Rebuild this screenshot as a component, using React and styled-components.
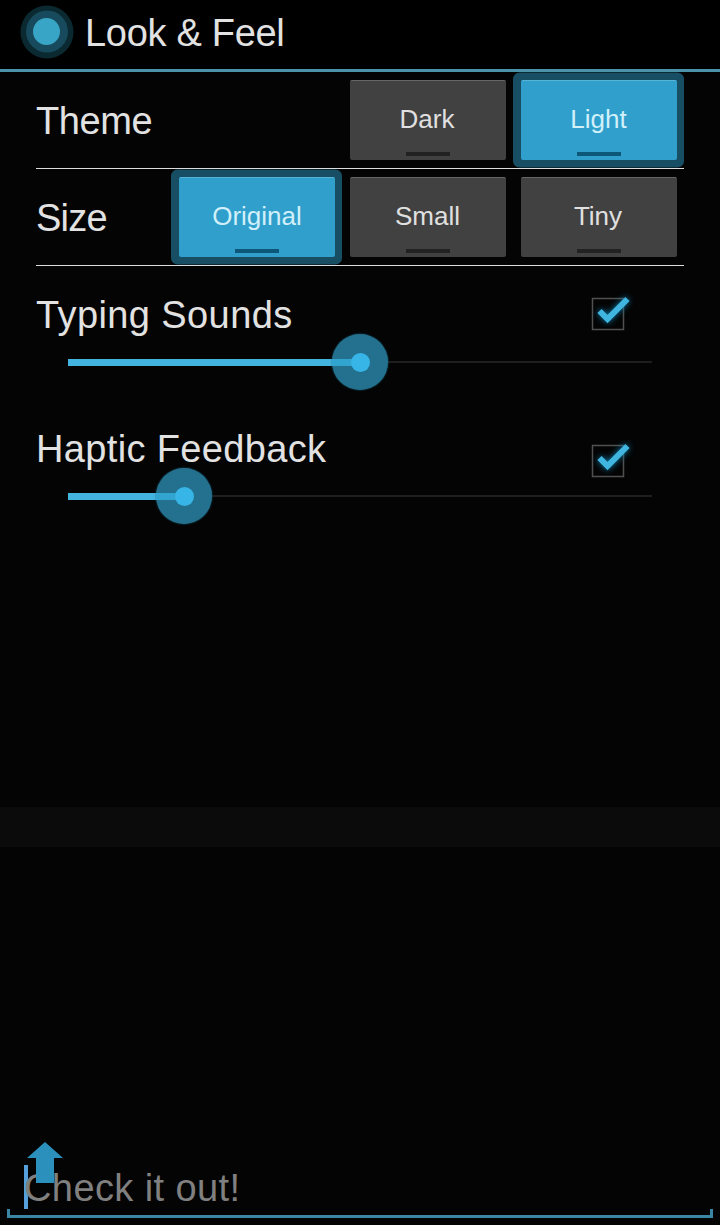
import styled, { createGlobalStyle } from 'styled-components';

const GlobalStyle = createGlobalStyle`
  * {
    box-sizing: border-box;
  }

  body {
    margin: 0;
    background-color: #040404;
    font-family: 'Liberation Sans', Arial, sans-serif;
    color: #e2e2e2;
  }
`;

const StyledScreen = styled.div`
  display: flex;
  flex-direction: column;
  width: 720px;
  height: 1225px;
  overflow: hidden;
`;

const StyledHeader = styled.header`
  display: flex;
  align-items: center;
  gap: 11px;
  height: 72px;
  padding: 0 20px 5px;
  background-color: #000000;
  border-bottom: 3px solid #4a93ab;
`;

const StyledText = styled.span`
  display: block;
  padding-top: ${({ $drop = 0 }) => $drop}px;
  font-size: 38px;
  line-height: 44px;
  white-space: nowrap;
  letter-spacing: ${({ $spacing = 0 }) => $spacing}px;
`;

const StyledSettings = styled.main`
  flex: none;
  height: 735px;
  padding: 0 36px;
`;

const StyledRow = styled.div`
  display: flex;
  align-items: center;
  justify-content: space-between;
  height: 97px;
  border-bottom: 1px solid #dcdcdc;
`;

const StyledOptions = styled.div`
  display: flex;
  gap: 15px;
  padding-right: 7px;
`;

const StyledOption = styled.button`
  display: flex;
  flex-direction: column;
  align-items: center;
  justify-content: space-between;
  width: 156px;
  height: 80px;
  padding: 23px 0 4px;
  border: 0;
  border-top: 1px solid ${({ $active }) => ($active ? '#55b4d8' : '#666666')};
  border-radius: 2px;
  background-color: ${({ $active }) => ($active ? '#309fcb' : '#414141')};
  box-shadow: ${({ $active }) => ($active ? '-0.5px 0 0 7.5px #174e63' : 'none')};
  color: ${({ $active }) => ($active ? '#d2f0fa' : '#e0e0e0')};
  font-family: inherit;
  font-size: 26px;
  line-height: 30px;

  &::after {
    content: '';
    width: 44px;
    height: 4px;
    background-color: ${({ $active }) => ($active ? '#0d5878' : '#222222')};
  }
`;

const StyledOptionLabel = styled.span`
  padding-right: ${({ $nudge = 1 }) => $nudge}px;
`;

const StyledSection = styled.section`
  height: 134px;
`;

const StyledSectionHead = styled.div`
  display: flex;
  align-items: flex-start;
  justify-content: space-between;
  height: 68px;
  padding: 27px 50px 0 0;
`;

const StyledCheck = styled.svg`
  flex: none;
  margin-top: ${({ $offset }) => $offset}px;
  overflow: visible;
`;

const StyledCheckMark = styled.path`
  filter: drop-shadow(0 0 3px #0b7fae);
`;

const StyledSlider = styled.div`
  display: flex;
  align-items: center;
  height: 56px;
  padding: 0 32px;
`;

const StyledFill = styled.div`
  height: 7px;
  background-color: #43b4e0;
`;

const StyledKnob = styled.div`
  flex: none;
  display: flex;
  align-items: center;
  width: 56px;
  height: 56px;
  margin: 0 -28px;
  border-radius: 50%;
  background-color: #23718e;
  box-shadow: 0 0 2px #1a6681;
  z-index: 1;

  &::before {
    content: '';
    width: 24px;
    height: 7px;
    background-color: #31a4d0;
  }

  &::after {
    content: '';
    width: 19px;
    height: 19px;
    margin-left: -5.5px;
    border-radius: 50%;
    background-color: #36b5e6;
  }
`;

const StyledTrack = styled.div`
  flex: 1;
  height: 2px;
  background-color: #1e1e1e;
`;

const StyledBand = styled.div`
  flex: none;
  height: 40px;
  background-color: #0b0b0b;
`;

const StyledPreview = styled.div`
  flex: 1;
  display: flex;
  flex-direction: column;
  justify-content: flex-end;
  padding: 0 7px 7px;
`;

const StyledInput = styled.div`
  position: relative;
  display: flex;
  align-items: center;
  height: 44px;
  padding-left: 17px;
  color: #808080;
`;

const StyledCaret = styled.span`
  width: 4px;
  height: 44px;
  margin-right: -4px;
  background-color: #559fdc;
`;

const StyledArrow = styled.svg`
  position: absolute;
  left: 20px;
  top: -23px;
`;

const StyledUnderline = styled.div`
  height: 9px;
  border: solid #3a87a5;
  border-width: 0 3px 3px;
`;

const Logo = () => (
  <svg width="54" height="54" viewBox="0 0 54 54">
    <circle cx="27" cy="27" r="26.5" fill="#0b2930" />
    <circle cx="27" cy="26.5" r="21" fill="#164a5c" />
    <circle cx="26.5" cy="26.5" r="13.5" fill="#39a5c6" />
  </svg>
);

const Checkbox = ({ offset }) => (
  <StyledCheck $offset={offset} width="42" height="36" viewBox="0 0 42 36">
    <rect x="0.5" y="3.5" width="31" height="31" fill="none" stroke="#505050" strokeWidth="1.5" />
    <StyledCheckMark
      d="M7.5 16 L15.5 24 L35.5 4"
      fill="none"
      stroke="#3fb5e0"
      strokeWidth="6"
    />
  </StyledCheck>
);

const Options = ({ items }) => (
  <StyledOptions>
    {items.map(({ label, active, nudge }) => (
      <StyledOption key={label} $active={active}>
        <StyledOptionLabel $nudge={nudge}>{label}</StyledOptionLabel>
      </StyledOption>
    ))}
  </StyledOptions>
);

const SliderSetting = ({ title, spacing, value, checkOffset }) => (
  <StyledSection>
    <StyledSectionHead>
      <StyledText $spacing={spacing}>{title}</StyledText>
      <Checkbox offset={checkOffset} />
    </StyledSectionHead>
    <StyledSlider>
      <StyledFill style={{ width: `${value}%` }} />
      <StyledKnob />
      <StyledTrack />
    </StyledSlider>
  </StyledSection>
);

const App = () => (
  <>
    <GlobalStyle />
    <StyledScreen>
      <StyledHeader>
        <Logo />
        <StyledText $drop={1} $spacing={-0.3}>
          Look &amp; Feel
        </StyledText>
      </StyledHeader>
      <StyledSettings>
        <StyledRow>
          <StyledText $drop={2} $spacing={-0.4}>
            Theme
          </StyledText>
          <Options items={[{ label: 'Dark', nudge: 2 }, { label: 'Light', active: true }]} />
        </StyledRow>
        <StyledRow>
          <StyledText $drop={2} $spacing={-0.8}>
            Size
          </StyledText>
          <Options
            items={[
              { label: 'Original', active: true, nudge: 0 },
              { label: 'Small' },
              { label: 'Tiny', nudge: 2 },
            ]}
          />
        </StyledRow>
        <SliderSetting title="Typing Sounds" spacing={0.4} value={50} checkOffset={2} />
        <SliderSetting title="Haptic Feedback" spacing={0.35} value={19.9} checkOffset={15} />
      </StyledSettings>
      <StyledBand />
      <StyledPreview>
        <StyledInput>
          <StyledCaret />
          <StyledText $drop={2} $spacing={0.4}>
            Check it out!
          </StyledText>
          <StyledArrow width="36" height="41" viewBox="0 0 36 41">
            <path d="M18 0 L36 16 H27 V41 H9 V16 H0 Z" fill="#2b91bc" />
          </StyledArrow>
        </StyledInput>
        <StyledUnderline />
      </StyledPreview>
    </StyledScreen>
  </>
);

export default App;
